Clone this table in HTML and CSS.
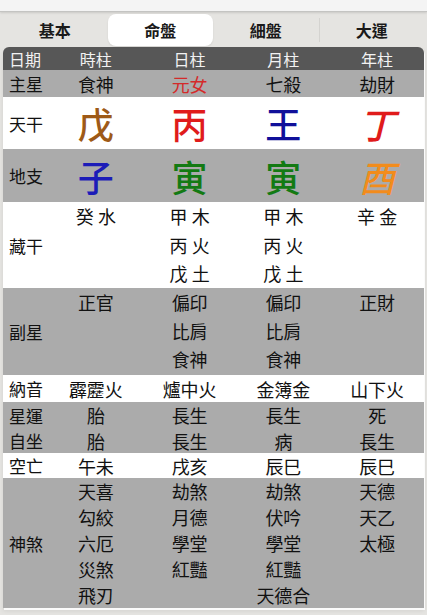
FILE: index.html
```html
<!DOCTYPE html>
<html lang="zh-Hant">
<head>
<meta charset="utf-8">
<title>命盤</title>
<link rel="stylesheet" href="styles.css">
</head>
<body>
<div class="topstrip"></div>
<div class="tabs">
  <div class="tab">基本</div>
  <div class="tab active">命盤</div>
  <div class="tab">細盤</div>
  <div class="tab sep">大運</div>
</div>
<div class="chart">
  <div class="row head h23">
    <div class="lab">日期</div><div class="c">時柱</div><div class="c">日柱</div><div class="c">月柱</div><div class="c">年柱</div>
  </div>
  <div class="row grey h27">
    <div class="lab">主星</div><div class="c">食神</div><div class="c red">元女</div><div class="c">七殺</div><div class="c">劫財</div>
  </div>
  <div class="row white h52 big">
    <div class="lab">天干</div><div class="c brown">戊</div><div class="c red2">丙</div><div class="c navy">王</div><div class="c red2 ital">丁</div>
  </div>
  <div class="row grey h53 big">
    <div class="lab">地支</div><div class="c blue">子</div><div class="c green">寅</div><div class="c green">寅</div><div class="c orange ital">酉</div>
  </div>
  <div class="row white h86 l29">
    <div class="lab">藏干</div>
    <div class="c top"><span>癸 水</span></div>
    <div class="c top"><span>甲 木</span><span>丙 火</span><span>戊 土</span></div>
    <div class="c top"><span>甲 木</span><span>丙 火</span><span>戊 土</span></div>
    <div class="c top"><span>辛 金</span></div>
  </div>
  <div class="row grey h87 l29">
    <div class="lab">副星</div>
    <div class="c top"><span>正官</span></div>
    <div class="c top"><span>偏印</span><span>比肩</span><span>食神</span></div>
    <div class="c top"><span>偏印</span><span>比肩</span><span>食神</span></div>
    <div class="c top"><span>正財</span></div>
  </div>
  <div class="row white h27">
    <div class="lab">納音</div><div class="c">霹靂火</div><div class="c">爐中火</div><div class="c">金簿金</div><div class="c">山下火</div>
  </div>
  <div class="row grey h26">
    <div class="lab">星運</div><div class="c">胎</div><div class="c">長生</div><div class="c">長生</div><div class="c">死</div>
  </div>
  <div class="row grey h25">
    <div class="lab">自坐</div><div class="c">胎</div><div class="c">長生</div><div class="c">病</div><div class="c">長生</div>
  </div>
  <div class="row white h25">
    <div class="lab">空亡</div><div class="c">午未</div><div class="c">戌亥</div><div class="c">辰巳</div><div class="c">辰巳</div>
  </div>
  <div class="row grey h130 l26">
    <div class="lab">神煞</div>
    <div class="c top"><span>天喜</span><span>勾絞</span><span>六厄</span><span>災煞</span><span>飛刃</span></div>
    <div class="c top"><span>劫煞</span><span>月德</span><span>學堂</span><span>紅豔</span></div>
    <div class="c top"><span>劫煞</span><span>伏吟</span><span>學堂</span><span>紅豔</span><span>天德合</span></div>
    <div class="c top"><span>天德</span><span>天乙</span><span>太極</span></div>
  </div>
</div>
</body>
</html>
```
FILE: styles.css
```css
* { box-sizing: border-box; }
html, body {
  margin: 0;
  padding: 0;
}
body {
  background: #e5e4e1;
  font-family: "Noto Sans CJK TC", "Noto Sans CJK SC", "DejaVu Sans", sans-serif;
  color: #111;
  width: 427px;
  height: 615px;
  overflow: hidden;
}
.topstrip {
  height: 12px;
  background: #f4f4f4;
  border-bottom: 1px solid #c4c4c2;
  box-shadow: 0 1px 2px rgba(0,0,0,0.12);
}
.tabs {
  display: grid;
  grid-template-columns: repeat(4, 1fr);
  margin: 2px 3px 0 2px;
  height: 30px;
}
.tab {
  display: flex;
  align-items: center;
  justify-content: center;
  font-size: 16px;
  font-weight: 600;
  color: #1a1a1a;
  border-radius: 8px;
}
.tab.active {
  background: #ffffff;
  box-shadow: 0 1px 2px rgba(0,0,0,0.08);
}
.tab.sep {
  border-left: 1px solid #d4d3d0;
  border-radius: 0;
  margin: 4px 0;
}
.chart {
  margin: 3px 3px 0 3px;
  border-radius: 6px 6px 0 0;
  overflow: hidden;
  box-shadow: 1px 2px 0 #fbfbfb, 0 3px 4px rgba(0,0,0,0.08);
}
.row {
  display: grid;
  grid-template-columns: 46px repeat(4, 1fr);
  align-items: stretch;
}
.head { background: #575757; color: #f2f2f2; }
.head .c, .head .lab { font-size: 16px; color: #f2f2f2; }
.grey { background: #ababab; }
.white { background: #ffffff; }
.h23 { height: 23px; }
.h25 { height: 25px; }
.h26 { height: 26px; }
.h27 { height: 27px; }
.h52 { height: 52px; }
.h53 { height: 53px; }
.h86 { height: 86px; }
.h87 { height: 87px; }
.h130 { height: 130px; }
.lab {
  display: flex;
  align-items: center;
  padding-left: 6px;
  font-size: 17px;
  white-space: nowrap;
}
.c {
  display: flex;
  align-items: center;
  justify-content: center;
  font-size: 18px;
  white-space: nowrap;
  line-height: 1;
}
.c.top {
  flex-direction: column;
  justify-content: flex-start;
}
.l29 .c span { display: block; height: 28.7px; line-height: 28.7px; }
.l26 .c span { display: block; height: 26px; line-height: 26px; }
.big .c { font-size: 36px; font-weight: 500; }
.red { color: #d42a2a; }
.red2 { color: #e01b1b; }
.brown { color: #9e5a17; }
.navy { color: #10109a; }
.blue { color: #1c1cb8; }
.green { color: #137a13; }
.orange { color: #f28c1c; }
.ital { font-style: italic; }
```
